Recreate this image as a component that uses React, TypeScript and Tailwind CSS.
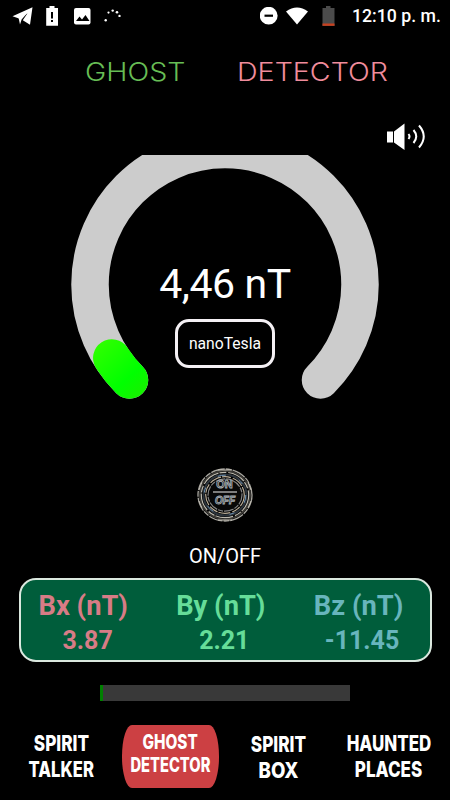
import React from 'react';

const FIELDS = [
  { label: 'Bx (nT)', value: '3.87', cls: 'text-[#d77c86]', labelCls: 'pl-[18px]', valueCls: 'pl-[42px]', width: 'w-[138px]' },
  { label: 'By (nT)', value: '2.21', cls: 'text-[#66dd99]', labelCls: 'pl-[18px]', valueCls: 'pl-[41px]', width: 'w-[138px]' },
  { label: 'Bz (nT)', value: '-11.45', cls: 'text-[#68b5bd]', labelCls: 'pl-[18px]', valueCls: 'pl-[29px]', width: 'w-[134px]' },
];

function StatusBar() {
  return (
    <div className="flex h-8 items-center pl-[12px] text-white">
      <svg width="22" height="20" viewBox="0 0 22 20" fill="currentColor">
        <path d="M0.500 10.300 20.500 1.200 18 18.800 10.800 14.200 15.500 7.300 7 12.600Z" />
        <path d="M6.500 11.500 15.500 6.800 9.600 13.500 8 18.400Z" />
      </svg>
      <svg className="ml-[11px]" width="15" height="20" viewBox="0 0 15 20">
        <path d="M1.500 2h3V0h5v2h3.500v17.800H1.200V2Z" fill="#fff" />
        <path d="M7 6v6.500M7 14v2" stroke="#000" strokeWidth="2" />
      </svg>
      <svg className="ml-[13px]" width="18" height="18" viewBox="0 0 18 18">
        <rect x="1" y="1" width="16.500" height="16.500" rx="2" fill="#fff" />
        <path d="M3 14 6.500 9.500 9 12.500 12.500 8 16.500 14Z" fill="#000" />
      </svg>
      <svg className="ml-[12px]" width="20" height="16" viewBox="0 0 20 16" fill="#fff">
        <circle cx="2.700" cy="12.300" r="1.200" />
        <circle cx="5.500" cy="4.600" r="1.100" />
        <circle cx="9.700" cy="2.600" r="1.200" />
        <circle cx="14" cy="4.300" r="1.300" />
        <circle cx="16.500" cy="7.900" r="1.200" />
      </svg>
      <svg className="ml-[137px]" width="18" height="18" viewBox="0 0 18 18">
        <circle cx="8.700" cy="8.700" r="8.900" fill="#fff" />
        <path d="M4.500 8.700h8.500" stroke="#000" strokeWidth="2.200" />
      </svg>
      <svg className="ml-[8px]" width="22" height="18" viewBox="0 0 22 18">
        <path d="M0 4.500Q11-3.500 22 4.500L11 17.500Z" fill="#fff" />
      </svg>
      <svg className="ml-[14px]" width="13" height="20" viewBox="0 0 13 20">
        <path d="M0.500 2h3.500V0h4.500v2h4v18H0.500Z" fill="#4b4b4b" />
        <rect x="0.500" y="17.500" width="12" height="2.300" fill="#c8401e" />
      </svg>
      <span className="ml-[17px] text-[17.700px] leading-8 font-medium whitespace-nowrap">12:10 p. m.</span>
    </div>
  );
}

function Gauge() {
  return (
    <div className="grid h-[245px] justify-items-center">
      <svg className="col-start-1 row-start-1" width="450" height="245" viewBox="0 155 450 245" fill="none" strokeWidth="37.500" strokeLinecap="round">
        <defs>
          <linearGradient id="level" gradientUnits="userSpaceOnUse" x1="100" y1="345" x2="142" y2="390">
            <stop offset="0" stopColor="#2cff00" />
            <stop offset="0.700" stopColor="#00ff00" />
            <stop offset="1" stopColor="#14f200" />
          </linearGradient>
        </defs>
        <path d="M129.500 380A135 135 0 1 1 320.500 380" stroke="#ccc" />
        <path d="M129.500 380A135 135 0 0 1 111.800 358" stroke="url(#level)" />
      </svg>
      <div className="col-start-1 row-start-1 flex flex-col items-center pt-[105px]">
        <p className="text-[41px] leading-[48px] tracking-[-0.4px] text-white">4,46 nT</p>
        <div className="mt-[11px] flex h-[49px] w-[100px] items-center justify-center rounded-[14px] border-3 border-[#f4f0f4] text-[15.700px] text-white">
          nanoTesla
        </div>
      </div>
    </div>
  );
}

function PowerButton() {
  return (
    <button className="block">
      <svg width="58" height="56" viewBox="0 0 58 56" fill="none">
        <ellipse cx="29" cy="28" rx="27" ry="26" stroke="#a8a69f" strokeWidth="1.300" strokeDasharray="14 1 6 1" />
        <ellipse cx="29" cy="28" rx="25.200" ry="24.200" stroke="#3c3a36" strokeWidth="1.600" />
        <ellipse cx="29" cy="28" rx="23.700" ry="22.700" stroke="#bdb9ae" strokeWidth="1.200" strokeDasharray="18 1 7 2" />
        <ellipse cx="29" cy="28" rx="21.500" ry="20.500" stroke="#2c343c" strokeWidth="2" />
        <ellipse cx="29" cy="28" rx="20.800" ry="19.800" stroke="#6f93b5" strokeWidth="1" strokeDasharray="8 14 5 17" />
        <ellipse cx="29" cy="28" rx="19.300" ry="18.300" stroke="#b9ac97" strokeWidth="1.200" strokeDasharray="12 1 9 2" />
        <ellipse cx="29" cy="28" rx="17" ry="16.200" fill="#080808" stroke="#848484" strokeWidth="1.200" strokeDasharray="10 1 5 1" />
        <path d="M22 3h14M22 53h14M6 15l-3 8M52 15l3 8M6 41l-3-7M52 41l3-7" stroke="#c4c0b6" />
        <path d="M17 25h24" stroke="#ccc" strokeWidth="1.200" />
        <text x="28.500" y="21" textAnchor="middle" fontFamily="Liberation Sans" fontSize="11" fontWeight="700" stroke="#a5adb3" strokeWidth="0.900" fill="#111">ON</text>
        <text x="29" y="36.500" textAnchor="middle" fontFamily="Liberation Sans" fontSize="10" fontWeight="700" fontStyle="italic" stroke="#a5adb3" strokeWidth="0.900" fill="#111">OFF</text>
      </svg>
    </button>
  );
}

export default function App() {
  return (
    <div className="h-[800px] w-[450px] overflow-hidden bg-black font-['Roboto',sans-serif]">
      <StatusBar />

      <h1 className="mt-6 flex h-8 pl-[84.500px] font-['Inter',sans-serif] text-[25px] leading-8 font-light">
        <span className="w-[152px] origin-left scale-x-[1.145] text-[#67bd55]">GHOST</span>
        <span className="origin-left scale-x-[1.145] text-[#f08c9c]">DETECTOR</span>
      </h1>

      <div className="mt-[34px] flex h-[33px] pl-[386px]">
        <svg width="41" height="29" viewBox="0 0 41 29" fill="none" stroke="#fff" strokeWidth="2">
          <path d="M1 9.500h6v11H1ZM8 9.500 18.500 1.500v26.500L8 20.500Z" fill="#fff" stroke="none" />
          <path d="M22.500 12q2 2.500 0 5M27.500 8q5.500 6.500 0 13M33 3.500q9.500 11 0 22" />
        </svg>
      </div>

      <Gauge />

      <div className="mt-[67px] flex flex-col items-center">
        <PowerButton />
        <span className="mt-[19px] h-7 text-[20px] leading-7 text-white">ON/OFF</span>
      </div>

      <div className="mx-auto mt-[8px] flex h-[84px] w-[413px] overflow-hidden rounded-[17px] border-2 border-[#dbe8df] bg-[#005d3b] pt-[9px] font-bold whitespace-nowrap">
        {FIELDS.map(f => (
          <div key={f.label} className={`${f.width} ${f.cls}`}>
            <p className={`text-[27.300px] leading-[34px] ${f.labelCls}`}>{f.label}</p>
            <p className={`text-[25px] leading-[35px] ${f.valueCls}`}>{f.value}</p>
          </div>
        ))}
      </div>

      <div className="mx-auto mt-[23px] h-4 w-[250px] bg-[#393939]">
        <div className="h-full w-[3px] bg-[#008000]" />
      </div>

      <nav className="mt-6 flex h-[63px] text-center font-['Inter',sans-serif] text-[22px] leading-[26px] font-extrabold whitespace-nowrap text-white">
        <a className="flex w-[122px] flex-col items-center pt-[5px]">
          <span className="scale-x-[0.780]">SPIRIT</span>
          <span className="scale-x-[0.755]">TALKER</span>
        </a>
        <a className="flex w-[97px] flex-col items-center rounded-[10px/31px] bg-[#cc4043] pt-[6px] text-[20px] leading-[23px]">
          <span className="scale-x-[0.765]">GHOST</span>
          <span className="scale-x-[0.735]">DETECTOR</span>
        </a>
        <a className="flex w-[119px] flex-col items-center pt-[6px]">
          <span className="scale-x-[0.780]">SPIRIT</span>
          <span className="scale-x-[0.850]">BOX</span>
        </a>
        <a className="flex w-[102px] flex-col items-center pt-[5px]">
          <span className="scale-x-[0.770]">HAUNTED</span>
          <span className="scale-x-[0.775]">PLACES</span>
        </a>
      </nav>
    </div>
  );
}
